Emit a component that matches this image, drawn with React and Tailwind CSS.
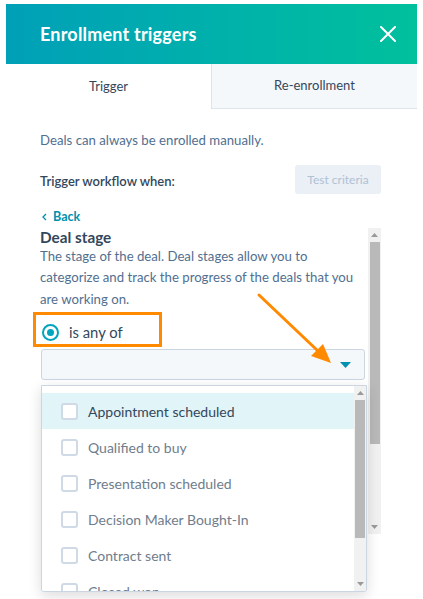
import React from "react";

const font = { fontFamily: "Lato, 'Noto Sans', sans-serif" };

const stages = [
  "Appointment scheduled",
  "Qualified to buy",
  "Presentation scheduled",
  "Decision Maker Bought-In",
  "Contract sent",
  "Closed won",
];

const ScrollArrow = ({ up }) => (
  <svg width="7" height="4" viewBox="0 0 7 4" className="shrink-0">
    <path d={up ? "M0 4 L3.5 0 L7 4 Z" : "M0 0 L3.5 4 L7 0 Z"} fill="#9a9a9a" />
  </svg>
);

const StageOption = ({ label, active }) => (
  <div className={`flex items-center h-9 pl-[19px] gap-[10px] ${active ? "bg-[#e1f4f8]" : "bg-white"}`}>
    <span className="w-[17px] h-[17px] rounded-[3px] border-2 border-[#cfdae6] bg-white shrink-0" />
    <span className={`text-[14px] ${active ? "text-[#33475b]" : "text-[#6f7d8c]"}`}>{label}</span>
  </div>
);

export default function App() {
  return (
    <div className="relative w-[423px] h-[599px] overflow-hidden bg-white" style={font}>
      <div className="ml-[6px] mt-1 w-[411px]">
        {/* header */}
        <div className="h-[60px] flex items-center justify-between pl-[34px] pr-[21px] bg-gradient-to-r from-[#00a0b8] to-[#00c09c]">
          <span className="text-white text-[18px] font-bold tracking-[0.2px]">Enrollment triggers</span>
          <svg width="16" height="16" viewBox="0 0 16 16">
            <path d="M1 1 L15 15 M15 1 L1 15" stroke="white" strokeWidth="2" strokeLinecap="round" />
          </svg>
        </div>

        {/* tabs */}
        <div className="flex h-[45px] text-[13px] text-[#33475b]">
          <div className="w-[205px] flex items-center justify-center bg-white">Trigger</div>
          <div className="flex-1 flex items-center justify-center bg-[#f5f8fa] border-l border-b border-[#dfe3eb]">
            Re-enrollment
          </div>
        </div>

        {/* body */}
        <div className="pl-[34px] pr-[36px] text-[#33475b]">
          <p className="mt-[22px] text-[13.2px] leading-[19px] text-[#516f90]">Deals can always be enrolled manually.</p>

          <div className="flex items-center justify-between mt-[15px]">
            <span className="text-[13px] font-semibold text-[#33475b] pt-[5px]">Trigger workflow when:</span>
            <span className="w-[86px] h-[29px] rounded-[3px] bg-[#eaf0f6] text-[#b0c1d4] text-[12px] flex items-center justify-center">
              Test criteria
            </span>
          </div>

          <div className="mt-[14px] flex items-center gap-[6px] text-[#0091ae] text-[12.5px] font-bold pl-[2px]">
            <svg width="5" height="8" viewBox="0 0 5 8">
              <path d="M4 1 L1 4 L4 7" stroke="#0091ae" strokeWidth="1.3" fill="none" />
            </svg>
            Back
          </div>

          {/* scroll region */}
          <div className="flex gap-[3px] h-[306px] mt-[1px]">
            <div className="flex-1 min-w-0">
              <div className="text-[15.3px] font-bold leading-[17px] mt-[1px]">Deal stage</div>
              <p className="text-[13.2px] leading-[21.5px] text-[#516f90]">
                The stage of the deal. Deal stages allow you to categorize and track the progress of the deals that you
                are working on.
              </p>
              <div className="flex items-center gap-[10px] h-[34px] mt-[5px] pl-[2px]">
                <span className="w-[17px] h-[17px] rounded-full border-2 border-[#00a4bd] flex items-center justify-center">
                  <span className="w-[7px] h-[7px] rounded-full bg-[#00a4bd]" />
                </span>
                <span className="text-[14.8px] text-[#33475b]">is any of</span>
              </div>
              <div className="ml-[1px] h-[31px] rounded-[3px] border border-[#cbd6e2] bg-[#f5f8fa] flex items-center justify-end pr-[13px]">
                <svg width="11" height="6" viewBox="0 0 11 6">
                  <path d="M0 0 L11 0 L5.5 6 Z" fill="#0091ae" />
                </svg>
              </div>
            </div>
            <div className="w-[13px] bg-[#f1f1f1] flex flex-col items-center">
              <div className="h-[14px] flex items-center"><ScrollArrow up /></div>
              <div className="w-[10px] h-[202px] bg-[#b9b9b9]" />
              <div className="flex-1" />
              <div className="h-[14px] flex items-center"><ScrollArrow /></div>
            </div>
          </div>
        </div>
      </div>

      {/* dropdown menu */}
      <div className="absolute left-[41px] top-[385px] w-[326px] h-[207px] bg-white border border-[#cbd6e2] rounded-b-[3px] shadow-[0_4px_14px_rgba(0,0,0,0.14)] flex overflow-hidden">
        <div className="flex-1 pt-[7px]">
          {stages.map((s, i) => (
            <StageOption key={s} label={s} active={i === 0} />
          ))}
        </div>
        <div className="w-[12px] bg-[#f1f1f1] flex flex-col items-center">
          <div className="h-[14px] flex items-center"><ScrollArrow up /></div>
          <div className="w-[10px] h-[138px] bg-[#b9b9b9]" />
          <div className="flex-1" />
          <div className="h-[14px] flex items-center"><ScrollArrow /></div>
        </div>
      </div>

      {/* annotation box */}
      <div className="absolute left-[33px] top-[312px] w-[129px] h-[35px] border-[3px] border-[#ff8a00]" />

      {/* annotation arrow */}
      <svg className="absolute left-0 top-0" width="423" height="599" viewBox="0 0 423 599">
        <path d="M259 295 L318 351" stroke="#ff8a00" strokeWidth="3" strokeLinecap="round" />
        <path d="M331 363 L311 356 L323 344 Z" fill="#ff8a00" />
      </svg>
    </div>
  );
}
